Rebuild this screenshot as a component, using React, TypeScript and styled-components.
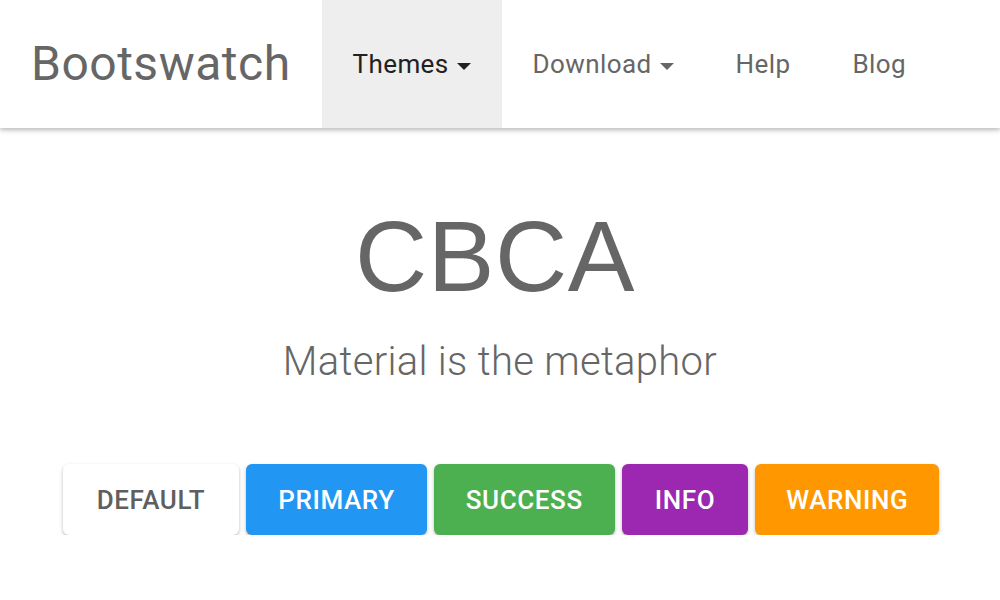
import React from "react";
import styled, { createGlobalStyle } from "styled-components";

const Global = createGlobalStyle`
  html, body { margin: 0; padding: 0; background: #fff; }
  body { font-family: Roboto, "Noto Sans", Arial, sans-serif; color: #666; }
  * { box-sizing: border-box; }
`;

const Navbar = styled.nav`
  display: flex;
  align-items: stretch;
  height: 128px;
  background: #fff;
  box-shadow: 0 2px 6px rgba(0, 0, 0, 0.16), 0 2px 4px rgba(0, 0, 0, 0.14);
  position: relative;
  z-index: 1;
`;

const Brand = styled.a`
  display: flex;
  align-items: center;
  padding: 0 31px 2px 31px;
  font-size: 48px;
  font-weight: 400;
  color: #666;
  text-decoration: none;
  letter-spacing: 0.5px;
`;

const NavList = styled.ul`
  display: flex;
  list-style: none;
  margin: 0;
  padding: 0;
`;

const NavItem = styled.li<{ $active?: boolean }>`
  display: flex;
  align-items: center;
  padding: 0 31px 0 31px;
  font-size: 26px;
  letter-spacing: 0.4px;
  color: ${(p) => (p.$active ? "#212121" : "#666")};
  background: ${(p) => (p.$active ? "#eeeeee" : "transparent")};
`;

const Caret = styled.span<{ $active?: boolean }>`
  display: inline-block;
  width: 0;
  height: 0;
  margin-left: 8px;
  border-top: 7px solid ${(p) => (p.$active ? "#212121" : "#666")};
  border-left: 7px solid transparent;
  border-right: 7px solid transparent;
  vertical-align: middle;
  position: relative;
  top: 2px;
`;

const Hero = styled.main`
  display: flex;
  flex-direction: column;
  align-items: center;
  padding-top: 72px;
`;

const Title = styled.h1`
  margin: 0;
  padding-right: 10px;
  font-family: "Liberation Sans", Arial, sans-serif;
  font-weight: 400;
  font-size: 100px;
  line-height: 112px;
  letter-spacing: 0.5px;
  color: #666;
`;

const Subtitle = styled.p`
  margin: 26px 0 0;
  font-family: Roboto, sans-serif;
  font-weight: 300;
  font-size: 40px;
  line-height: 48px;
  color: #666;
  letter-spacing: 0.3px;
`;

const ButtonRow = styled.div`
  display: flex;
  gap: 7px;
  margin-top: 78px;
  padding-left: 2px;
`;

const Button = styled.button<{ $bg: string; $fg: string; $pad: number }>`
  height: 71px;
  padding: 0 ${(p) => p.$pad}px;
  border: none;
  border-radius: 6px;
  background: ${(p) => p.$bg};
  color: ${(p) => p.$fg};
  font-family: Roboto, sans-serif;
  font-weight: 500;
  font-size: 26px;
  letter-spacing: 0.6px;
  text-transform: uppercase;
  box-shadow: 0 2px 4px rgba(0, 0, 0, 0.2), 0 1px 2px rgba(0, 0, 0, 0.1);
`;

const buttons = [
  { label: "Default", bg: "#ffffff", fg: "#5f5f5f", pad: 34 },
  { label: "Primary", bg: "#2196f3", fg: "#fff", pad: 32 },
  { label: "Success", bg: "#4caf50", fg: "#fff", pad: 32 },
  { label: "Info", bg: "#9c27b0", fg: "#fff", pad: 33 },
  { label: "Warning", bg: "#ff9800", fg: "#fff", pad: 31 },
];

export default function App() {
  return (
    <>
      <Global />
      <Navbar>
        <Brand href="#">Bootswatch</Brand>
        <NavList>
          <NavItem $active>
            Themes <Caret $active />
          </NavItem>
          <NavItem>
            Download <Caret />
          </NavItem>
          <NavItem>Help</NavItem>
          <NavItem>Blog</NavItem>
        </NavList>
      </Navbar>
      <Hero>
        <Title>CBCA</Title>
        <Subtitle>Material is the metaphor</Subtitle>
        <ButtonRow>
          {buttons.map((b) => (
            <Button key={b.label} $bg={b.bg} $fg={b.fg} $pad={b.pad}>
              {b.label}
            </Button>
          ))}
        </ButtonRow>
      </Hero>
    </>
  );
}
